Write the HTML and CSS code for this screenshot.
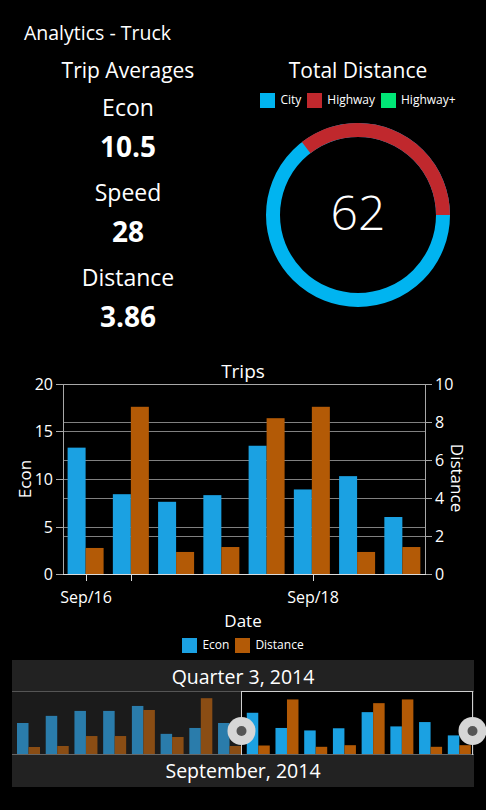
FILE: index.html
```html
<!DOCTYPE html>
<html lang="en">
<head>
    <meta charset="UTF-8">
    <meta name="viewport" content="width=device-width, initial-scale=1.0">
    <title>Analytics - Truck</title>
    <link rel="stylesheet" href="styles.css">
</head>
<body>
    <div class="page-title">Analytics - Truck</div>

    <div class="summary">
        <!-- averages -->
        <div class="averages">
            <div class="section-title">Trip Averages</div>
            <div class="stat">
                <div class="stat-label">Econ</div>
                <div class="stat-value">10.5</div>
            </div>
            <div class="stat">
                <div class="stat-label">Speed</div>
                <div class="stat-value">28</div>
            </div>
            <div class="stat">
                <div class="stat-label">Distance</div>
                <div class="stat-value">3.86</div>
            </div>
        </div>

        <!-- total distance donut -->
        <div class="distance">
            <div class="section-title">Total Distance</div>
            <div class="legend legend-top">
                <span class="legend-item"><i class="swatch city"></i>City</span>
                <span class="legend-item"><i class="swatch highway"></i>Highway</span>
                <span class="legend-item"><i class="swatch highway-plus"></i>Highway+</span>
            </div>
            <svg class="donut" width="184" height="184" viewBox="0 0 184 184">
                <circle cx="92" cy="92" r="85" fill="none" stroke="#00b4f0" stroke-width="14"/>
                <circle cx="92" cy="92" r="85" fill="none" stroke="#c0282d" stroke-width="14"
                        stroke-dasharray="189.9 534.1" stroke-dashoffset="-344.2"/>
                <text class="donut-value" x="92" y="88">62</text>
            </svg>
        </div>
    </div>

    <!-- trips chart -->
    <svg id="trips" class="trips" width="486" height="278" viewBox="0 0 486 278">
        <text class="chart-title" x="243" y="16">Trips</text>

        <g class="grid">
            <line x1="63" y1="76.5" x2="425" y2="76.5"/>
            <line x1="63" y1="124.5" x2="425" y2="124.5"/>
            <line x1="63" y1="172.5" x2="425" y2="172.5"/>
            <line x1="63" y1="67.5" x2="425" y2="67.5"/>
            <line x1="63" y1="105.5" x2="425" y2="105.5"/>
            <line x1="63" y1="143.5" x2="425" y2="143.5"/>
            <line x1="63" y1="181.5" x2="425" y2="181.5"/>
        </g>

        <g id="bars"></g>

        <g class="axis">
            <line x1="63" y1="29.5" x2="425" y2="29.5"/>
            <line x1="63.5" y1="29" x2="63.5" y2="219"/>
            <line x1="425.5" y1="29" x2="425.5" y2="219"/>
            <!-- left ticks -->
            <line x1="56" y1="29.5" x2="63" y2="29.5"/>
            <line x1="56" y1="76.5" x2="63" y2="76.5"/>
            <line x1="56" y1="124.5" x2="63" y2="124.5"/>
            <line x1="56" y1="172.5" x2="63" y2="172.5"/>
            <line x1="56" y1="219.5" x2="63" y2="219.5"/>
            <!-- right ticks -->
            <line x1="426" y1="29.5" x2="432" y2="29.5"/>
            <line x1="426" y1="67.5" x2="432" y2="67.5"/>
            <line x1="426" y1="105.5" x2="432" y2="105.5"/>
            <line x1="426" y1="143.5" x2="432" y2="143.5"/>
            <line x1="426" y1="181.5" x2="432" y2="181.5"/>
            <line x1="426" y1="219.5" x2="432" y2="219.5"/>
        </g>
        <g class="axis-base">
            <line x1="63" y1="219.5" x2="426" y2="219.5"/>
            <line x1="86.5" y1="220" x2="86.5" y2="226"/>
            <line x1="131.5" y1="220" x2="131.5" y2="226"/>
            <line x1="313.5" y1="220" x2="313.5" y2="226"/>
        </g>

        <g class="tick-left">
            <text x="53" y="29">20</text>
            <text x="53" y="76">15</text>
            <text x="53" y="124">10</text>
            <text x="53" y="172">5</text>
            <text x="53" y="219">0</text>
        </g>
        <g class="tick-right">
            <text x="435" y="29">10</text>
            <text x="435" y="67">8</text>
            <text x="435" y="105">6</text>
            <text x="435" y="143">4</text>
            <text x="435" y="181">2</text>
            <text x="435" y="219">0</text>
        </g>
        <g class="tick-bottom">
            <text x="86" y="242">Sep/16</text>
            <text x="313" y="242">Sep/18</text>
        </g>

        <text class="axis-title" x="243" y="265">Date</text>
        <text class="axis-title" transform="translate(24 124) rotate(-90)">Econ</text>
        <text class="axis-title" transform="translate(457 123) rotate(90)">Distance</text>
    </svg>

    <div class="legend legend-chart">
        <span class="legend-item"><i class="swatch econ"></i>Econ</span>
        <span class="legend-item"><i class="swatch dist"></i>Distance</span>
    </div>

    <!-- range navigator -->
    <div class="navigator">
        <div class="nav-band nav-top">Quarter 3, 2014</div>
        <svg id="navChart" class="nav-chart" width="462" height="64" viewBox="0 0 462 64"></svg>
        <div class="nav-band nav-bottom">September, 2014</div>
    </div>

    <script>
        var NS = 'http://www.w3.org/2000/svg';

        function bar(parent, x, y, w, h, color) {
            var r = document.createElementNS(NS, 'rect');
            r.setAttribute('x', x);
            r.setAttribute('y', y);
            r.setAttribute('width', w);
            r.setAttribute('height', h);
            r.setAttribute('fill', color);
            parent.appendChild(r);
            return r;
        }

        function line(parent, x1, y1, x2, y2, color) {
            var l = document.createElementNS(NS, 'line');
            l.setAttribute('x1', x1);
            l.setAttribute('y1', y1);
            l.setAttribute('x2', x2);
            l.setAttribute('y2', y2);
            l.setAttribute('stroke', color);
            parent.appendChild(l);
        }

        function circle(parent, cx, cy, r, color) {
            var c = document.createElementNS(NS, 'circle');
            c.setAttribute('cx', cx);
            c.setAttribute('cy', cy);
            c.setAttribute('r', r);
            c.setAttribute('fill', color);
            parent.appendChild(c);
        }

        // trips chart
        var econ = [13.3, 8.4, 7.6, 8.3, 13.5, 8.9, 10.3, 6.0];
        var dist = [1.37, 8.8, 1.16, 1.42, 8.2, 8.8, 1.16, 1.42];
        var bars = document.getElementById('bars');
        econ.forEach(function (v, i) {
            var x = 67.6 + 45.25 * i;
            bar(bars, x, 219 - v * 9.5, 18, v * 9.5, '#1ba1e2');
            bar(bars, x + 18, 219 - dist[i] * 19, 18, dist[i] * 19, '#b35a06');
        });

        // navigator
        var navEcon = [10, 12.3, 13.9, 13.9, 15.5, 6.5, 8.4, 10].concat(econ);
        var navDist = [1.13, 1.29, 2.9, 2.9, 7.1, 2.74, 9.0, 1.29].concat(dist);
        var nav = document.getElementById('navChart');
        var selStart = 229, selEnd = 460;

        bar(nav, 0, 0, 462, 64, '#1b1b1b');
        bar(nav, selStart, 0, selEnd - selStart, 64, '#000');
        line(nav, 0, 0.5, 462, 0.5, '#555');

        navEcon.forEach(function (v, i) {
            var x = 5 + 28.72 * i;
            var on = i >= 8;
            bar(nav, x, 63 - v * 3.1, 11.5, v * 3.1, on ? '#1ba1e2' : '#2a7cab');
            bar(nav, x + 11.5, 63 - navDist[i] * 6.2, 11.5, navDist[i] * 6.2, on ? '#b35a06' : '#8a4d14');
        });

        line(nav, 0, 63.5, 462, 63.5, '#666');
        line(nav, selStart, 0.5, selEnd, 0.5, '#cfcfcf');
        line(nav, selStart + 0.5, 0, selStart + 0.5, 64, '#cfcfcf');
        line(nav, selEnd + 0.5, 0, selEnd + 0.5, 64, '#cfcfcf');

        [selStart, selEnd].forEach(function (x) {
            circle(nav, x + 0.5, 40, 14, '#d6d6d6');
            circle(nav, x + 0.5, 40, 5, '#555');
        });
    </script>
</body>
</html>
```

FILE: styles.css
```css
* {
    margin: 0;
    padding: 0;
    box-sizing: border-box;
}

body {
    background-color: #000;
    color: #fff;
    font-family: 'Open Sans', 'Noto Sans', sans-serif;
    width: 486px;
    height: 810px;
    overflow: hidden;
}

.page-title {
    padding: 20px 0 0 24px;
    font-size: 19.5px;
    line-height: 26px;
}

.summary {
    display: grid;
    grid-template-columns: 256px 204px;
    height: 292px;
}

.averages,
.distance {
    display: flex;
    flex-direction: column;
    align-items: center;
}

.section-title {
    margin-top: 11px;
    font-size: 21px;
    line-height: 26px;
}

.averages .section-title {
    margin-bottom: 7px;
}

.stat {
    display: flex;
    flex-direction: column;
    align-items: center;
    margin-bottom: 7px;
}

.stat-label {
    font-size: 23px;
    line-height: 34px;
}

.stat-value {
    font-size: 28px;
    font-weight: bold;
    line-height: 44px;
}

.legend {
    display: flex;
    justify-content: center;
    gap: 6px;
    font-size: 12px;
    line-height: 16px;
}

.legend-item {
    display: flex;
    align-items: center;
    gap: 5px;
}

.swatch {
    display: inline-block;
    width: 15px;
    height: 15px;
}

.swatch.city { background-color: #00b4f0; }
.swatch.highway { background-color: #c0282d; }
.swatch.highway-plus { background-color: #00e676; }
.swatch.econ { background-color: #1ba1e2; }
.swatch.dist { background-color: #b35a06; }

.legend-top {
    margin-top: 9px;
}

.donut {
    margin-top: 15px;
}

.donut-value {
    fill: #fff;
    font-size: 48px;
    font-weight: 300;
    text-anchor: middle;
    dominant-baseline: central;
}

/* trips chart */
.trips {
    display: block;
    margin-top: 17px;
    font-family: 'Open Sans', 'Noto Sans', sans-serif;
}

.trips text {
    fill: #fff;
    dominant-baseline: central;
}

.chart-title {
    font-size: 19px;
    text-anchor: middle;
}

.grid line {
    stroke: #808080;
    stroke-width: 1;
}

.axis line {
    stroke: #a8a8a8;
    stroke-width: 1;
}

.axis-base line {
    stroke: #dcdcdc;
    stroke-width: 1;
}

.tick-left text {
    font-size: 16px;
    text-anchor: end;
}

.tick-right text {
    font-size: 16px;
    text-anchor: start;
}

.tick-bottom text {
    font-size: 16px;
    text-anchor: middle;
}

.axis-title {
    font-size: 17px;
    text-anchor: middle;
}

.legend-chart {
    margin-top: 4px;
}

/* range navigator */
.navigator {
    margin: 7px 12px 0;
    background-color: #222;
}

.nav-band {
    text-align: center;
    font-size: 19.5px;
}

.nav-top {
    height: 31px;
    padding-top: 2px;
    line-height: 29px;
}

.nav-bottom {
    height: 32px;
    line-height: 32px;
}

.nav-chart {
    display: block;
    overflow: visible;
}
```
